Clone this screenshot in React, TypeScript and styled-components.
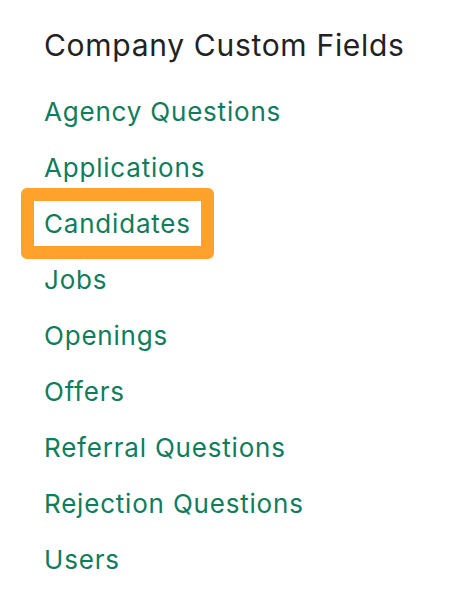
import React from "react";
import styled, { createGlobalStyle } from "styled-components";

const GlobalStyle = createGlobalStyle`
  body {
    margin: 0;
    background: #fff;
    font-family: Inter, "Noto Sans", sans-serif;
  }
`;

const Page = styled.div`
  padding: 25px 0 0 44px;
`;

const Title = styled.h2`
  margin: 0 0 18px;
  font-size: 30px;
  font-weight: 400;
  line-height: 40px;
  letter-spacing: 0.7px;
  color: #222;
`;

const List = styled.ul`
  list-style: none;
  margin: 0;
  padding: 0;
`;

const Item = styled.li`
  display: flex;
  align-items: center;
  height: 56px;
`;

const FieldLink = styled.a<{ $highlight?: boolean }>`
  position: relative;
  z-index: ${(p) => (p.$highlight ? 1 : 0)};
  display: inline-block;
  padding: 0 10px;
  margin-left: ${(p) => (p.$highlight ? "-23px" : "-10px")};
  line-height: 45px;
  font-size: 26px;
  letter-spacing: 0.8px;
  color: #0f7d5c;
  text-decoration: none;
  border: ${(p) => (p.$highlight ? "13px solid #ffa22b" : "none")};
  border-radius: 6px;
  background: ${(p) => (p.$highlight ? "#fff" : "transparent")};
`;

const fields = [
  "Agency Questions",
  "Applications",
  "Candidates",
  "Jobs",
  "Openings",
  "Offers",
  "Referral Questions",
  "Rejection Questions",
  "Users",
];

export default function App() {
  return (
    <>
      <GlobalStyle />
      <Page>
        <Title>Company Custom Fields</Title>
        <List>
          {fields.map((f) => (
            <Item key={f}>
              <FieldLink href="#" $highlight={f === "Candidates"}>
                {f}
              </FieldLink>
            </Item>
          ))}
        </List>
      </Page>
    </>
  );
}
